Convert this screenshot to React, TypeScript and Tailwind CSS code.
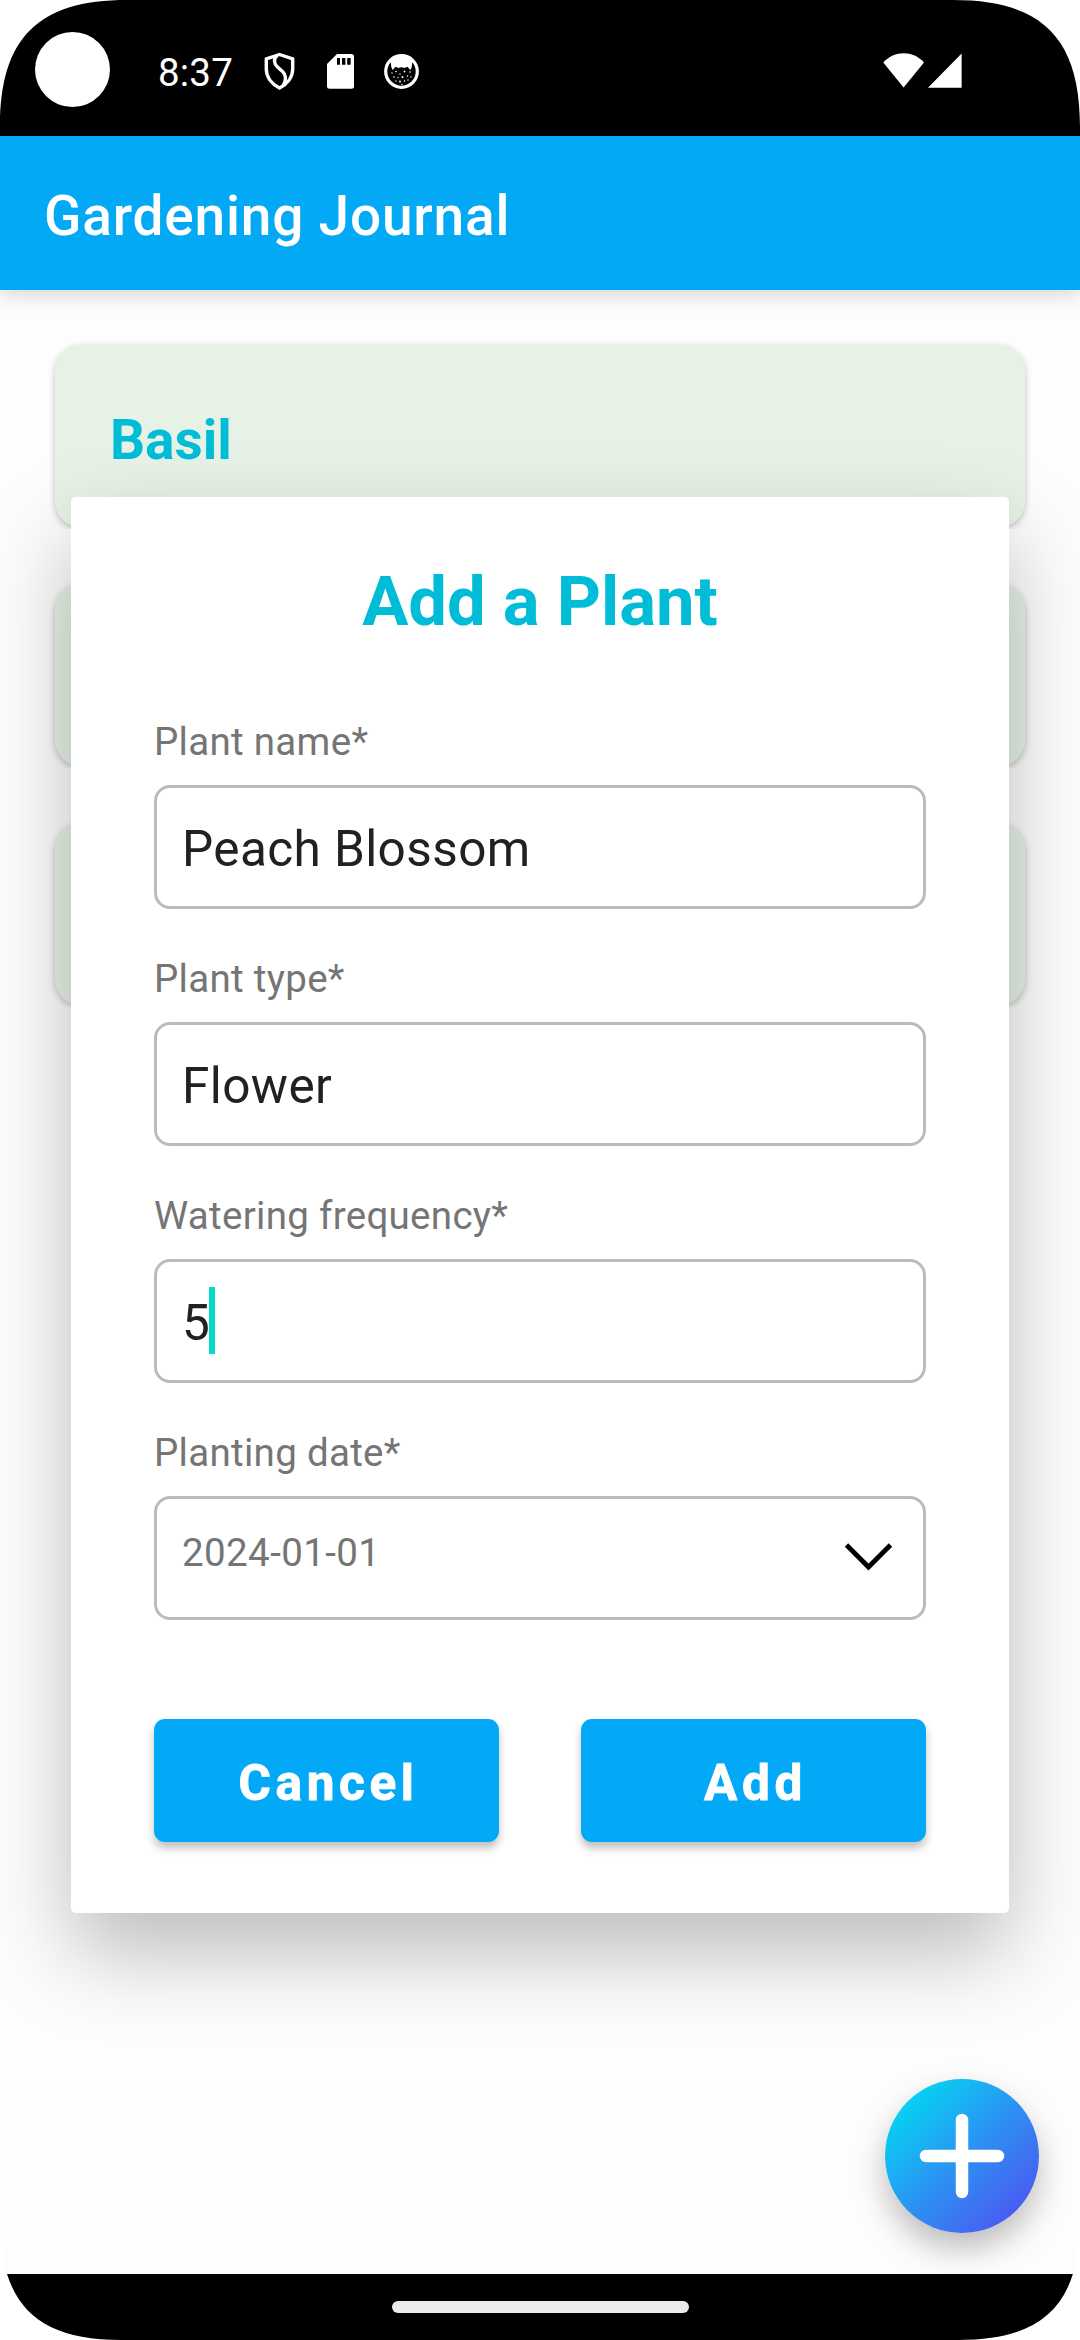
import type { ReactNode } from "react";

const plants = ["Basil", "", ""];

function StatusBar() {
  return (
    <div className="flex h-[136px] shrink-0 bg-black pl-[35px] pr-[118px]">
      <div className="mt-8 size-[75px] shrink-0 rounded-full bg-white" />
      <div className="ml-12 mt-[50px] h-[46px] w-[76px] text-[38.5px] leading-[46px] tracking-[0.2px] text-white">8:37</div>
      <svg className="ml-[30px] mt-[52px] h-[38px] w-[31px] shrink-0" viewBox="0 0 31 38" fill="none" stroke="white" strokeWidth="3.4" strokeLinejoin="round">
        <path d="M15.5 2.5 L28.7 6.8 V17 C28.7 25.5 23 32.3 15.5 36 C8 32.3 2.3 25.5 2.3 17 V6.8 Z" />
        <path d="M13 3.5 C9.3 7 9.8 11.5 13.5 15 L18.5 19.5 C22.3 23 22.3 27.5 19.5 33" />
      </svg>
      <svg className="ml-[32px] mt-[54px] h-[35px] w-[27px] shrink-0" viewBox="0 0 27 35">
        <path d="M10 0 H24.5 Q27 0 27 2.5 V32.2 Q27 34.7 24.5 34.7 H2.5 Q0 34.7 0 32.2 V10 Z" fill="white" />
        <path d="M10 4 h3 v6.8 h-3z M15 4 h3.4 v6.8 h-3.4z M20.2 4 h3.4 v6.8 h-3.4z" fill="black" />
      </svg>
      <svg className="ml-[30px] mt-[54px] size-[35px] shrink-0" viewBox="0 0 35 35">
        <circle cx="17.5" cy="17.5" r="15.8" fill="black" stroke="white" strokeWidth="3.2" />
        <path d="M6.5 7 Q17.5 -3 28.5 7 L27.6 13.5 L26.4 16 L23.4 12.8 L20.5 14 Q17.5 12.6 14.5 14 L11.6 12.8 L8.6 16 L7.4 13.5 Z" fill="white" />
        <g fill="white">
          <circle cx="8" cy="19" r=".7" />
          <circle cx="12" cy="17.5" r=".8" />
          <circle cx="16" cy="20" r=".7" />
          <circle cx="20.5" cy="17.5" r=".9" />
          <circle cx="26" cy="18" r=".8" />
          <circle cx="10" cy="23" r=".8" />
          <circle cx="14" cy="23.5" r=".7" />
          <circle cx="18.5" cy="23" r="1" />
          <circle cx="23.5" cy="22" r=".8" />
          <circle cx="27" cy="23" r=".7" />
          <circle cx="16" cy="27.5" r="1" />
          <circle cx="12" cy="27" r=".7" />
          <circle cx="20.5" cy="27" r=".8" />
          <circle cx="24" cy="26" r=".7" />
          <circle cx="18" cy="30.5" r=".7" />
        </g>
      </svg>
      <div className="grow" />
      <svg className="mt-[53px] h-[35px] w-[79px] shrink-0" viewBox="0 0 79 35" fill="white">
        <path d="M0.3 9.5 C11.5 -2.8 29.8 -2.8 41 9.5 L20.6 34.6 Z" />
        <path d="M45 34.7 L78.6 0.5 V34.7 Z" />
      </svg>
    </div>
  );
}

function PlantCard({ name }: { name: string }) {
  return (
    <div className="h-[184px] [clip-path:inset(-12px_-12px_0_-12px)]">
      <div className="flex h-[183px] items-center rounded-[27px] bg-[#e7f2e7] pl-[55px] pt-[8px] text-[55px] font-bold text-[#00bcd6] shadow-[0_2px_7px_rgba(0,0,0,0.24)]">
        {name}
      </div>
    </div>
  );
}

function Field({ label, children }: { label: string; children: ReactNode }) {
  return (
    <div className="mb-[47px]">
      <div className="mb-[21px] h-[45px] text-[38.5px] leading-[45px] tracking-[0.3px] text-[#757575]">{label}</div>
      <div className="flex h-[124px] rounded-[16px] border-[3px] border-[#bbbbbb] pl-[25px] text-[49.5px] leading-[122px] tracking-[0.4px] text-[#212121]">
        {children}
      </div>
    </div>
  );
}

function ActionButton({ children }: { children: ReactNode }) {
  return (
    <button className="h-[123px] w-[345px] rounded-[11px] bg-[#03a9f7] pl-1 pt-[5px] text-center text-[49.5px] font-bold tracking-[4.6px] text-white shadow-[0_6px_9px_rgba(0,0,0,0.25)] [-webkit-text-stroke:0.9px_white]">
      {children}
    </button>
  );
}

function AddPlantDialog() {
  return (
    <div className="absolute left-[71px] top-[497px] h-[1416px] w-[938px] rounded-[5px] bg-white px-[83px] pt-[65px] shadow-[0_40px_86px_rgba(0,0,0,0.26)]">
      <h2 className="mb-[77px] h-20 text-center text-[68.75px] font-bold leading-[80px] text-[#00bcd7]">Add a Plant</h2>
      <Field label="Plant name*">Peach Blossom</Field>
      <Field label="Plant type*">Flower</Field>
      <Field label="Watering frequency*">
        5<span className="-ml-px mt-[25px] h-[67px] w-[6px] bg-[#03dac8]" />
      </Field>
      <Field label="Planting date*">
        <span className="mt-[31px] h-[45px] grow text-[38.5px] leading-[45px] text-[#757575]">2024-01-01</span>
        <svg className="mr-[30px] mt-[43px] h-[29px] w-[49px]" viewBox="0 0 49 29" fill="none" stroke="black" strokeWidth="4.8">
          <path d="M2.5 3 L24.5 25 L46.5 3" />
        </svg>
      </Field>
      <div className="mt-[99px] flex justify-between">
        <ActionButton>Cancel</ActionButton>
        <ActionButton>Add</ActionButton>
      </div>
    </div>
  );
}

function Corner({ className }: { className: string }) {
  return (
    <svg className={className} viewBox="0 0 127 127" fill="white">
      <path d="M0 0 H127 C38 0 0 38 0 127 Z" />
    </svg>
  );
}

export default function App() {
  return (
    <div className="relative flex h-[2340px] w-[1080px] flex-col overflow-hidden bg-[#fdfdfd] font-[Roboto,sans-serif]">
      <StatusBar />
      <header className="flex h-[154px] shrink-0 items-center bg-[#03a9f4] pl-11 pt-[6px] text-[55px] font-medium tracking-[0.8px] text-white shadow-[0_4px_20px_rgba(0,0,0,0.17)]">
        Gardening Journal
      </header>
      <main className="flex grow flex-col gap-[55px] px-[55px] pt-[55px]">
        {plants.map((name, i) => (
          <PlantCard key={i} name={name} />
        ))}
      </main>
      <nav className="z-10 flex h-[66px] shrink-0 justify-center bg-black pt-[27px]">
        <div className="h-[12px] w-[297px] rounded-[6px] bg-[#ebebeb]" />
      </nav>
      <AddPlantDialog />
      <button className="absolute left-[885px] top-[2079px] flex size-[154px] items-center justify-center rounded-full bg-[linear-gradient(135deg,#00dcf2_8%,#2d90f2_52%,#5050f2_94%)] shadow-[0_16px_32px_rgba(0,0,0,0.26)]">
        <svg className="size-[88px]" viewBox="0 0 88 88" stroke="white" strokeWidth="12.5" strokeLinecap="round">
          <path d="M44 8 V80 M8 44 H80" />
        </svg>
      </button>
      <Corner className="absolute left-0 top-0 size-[127px]" />
      <Corner className="absolute right-0 top-0 size-[127px] rotate-90" />
      <Corner className="absolute bottom-0 right-0 z-20 size-[121px] rotate-180" />
      <Corner className="absolute bottom-0 left-0 z-20 size-[121px] -rotate-90" />
    </div>
  );
}
